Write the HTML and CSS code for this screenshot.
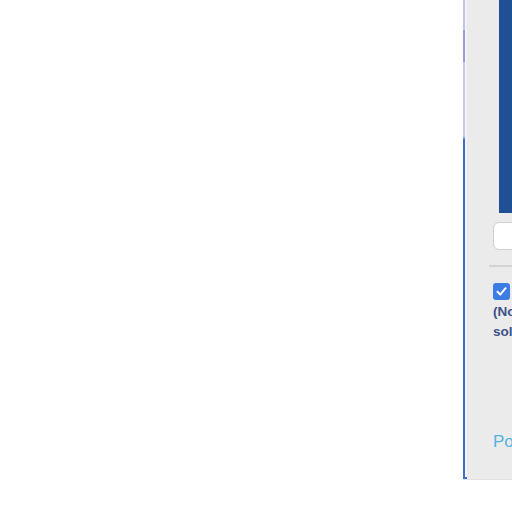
FILE: index.html
```html
<!DOCTYPE html>
<html>
<head>
<meta charset="utf-8">
<link rel="stylesheet" href="styles.css">
</head>
<body>
<div class="page">
  <aside class="panel">
    <div class="rail"></div>
    <div class="inner-edge"></div>
    <div class="content">
      <div class="preview"></div>
      <input class="field" type="text">
      <hr class="divider">
      <label class="check-row">
        <span class="checkbox">
          <svg width="13" height="13" viewBox="0 0 13 13"><path d="M2.5 6.8 L5.2 9.6 L10.6 3.2" fill="none" stroke="#fff" stroke-width="2" stroke-linecap="round" stroke-linejoin="round"/></svg>
        </span>
      </label>
      <p class="note">(Not recommended)<br>solid backgrounds</p>
      <a class="link">Powered by</a>
    </div>
  </aside>
</div>
</body>
</html>
```
FILE: styles.css
```css
html, body {
  margin: 0;
  padding: 0;
  background: #fff;
  overflow: hidden;
  width: 512px;
  height: 512px;
}
.page {
  display: flex;
  padding-left: 463px;
  width: 800px;
}
.panel {
  display: flex;
  width: 300px;
  height: 480px;
  background: #ebebeb;
  border-bottom: 1px solid #e2e2e2;
  box-sizing: border-box;
}
.rail {
  width: 2px;
  flex: none;
  background: linear-gradient(to bottom,
    #c4c4ea 0, #c4c4ea 30px,
    #9c9cd8 30px, #9c9cd8 62px,
    #c8c8ec 62px, #c8c8ec 136px,
    #3f6cc6 140px, #3f6cc6 100%);
}
.inner-edge {
  width: 2px;
  flex: none;
  background: #f3f3f6;
  border-bottom: 2px solid #3f6cc6;
  box-sizing: border-box;
}
.content {
  flex: 1;
  display: flex;
  flex-direction: column;
  align-items: flex-start;
  padding-left: 22px;
  font-family: "Liberation Sans", Arial, sans-serif;
}
.preview {
  width: 240px;
  height: 213px;
  margin-left: 10px;
  background: #1f4f94;
}
.field {
  margin: 9px 0 0 4px;
  width: 240px;
  height: 28px;
  box-sizing: border-box;
  border: 1px solid #cfcfcf;
  border-radius: 6px;
  background: #fff;
  outline: none;
  padding: 0;
}
.divider {
  margin: 15px 0 0 0;
  width: 260px;
  border: 0;
  height: 2px;
  background: #d3d3d3;
}
.check-row {
  margin: 16px 0 0 4px;
  display: flex;
}
.checkbox {
  width: 17px;
  height: 17px;
  border-radius: 3px;
  background: #3b7de2;
  display: flex;
  align-items: center;
  justify-content: center;
}
.note {
  margin: 2px 0 0 4px;
  font-size: 13.5px;
  line-height: 20px;
  font-weight: bold;
  color: #3d5088;
  white-space: nowrap;
}
.link {
  margin: 90px 0 0 4px;
  font-size: 17px;
  color: #55b2e2;
  white-space: nowrap;
}
```
